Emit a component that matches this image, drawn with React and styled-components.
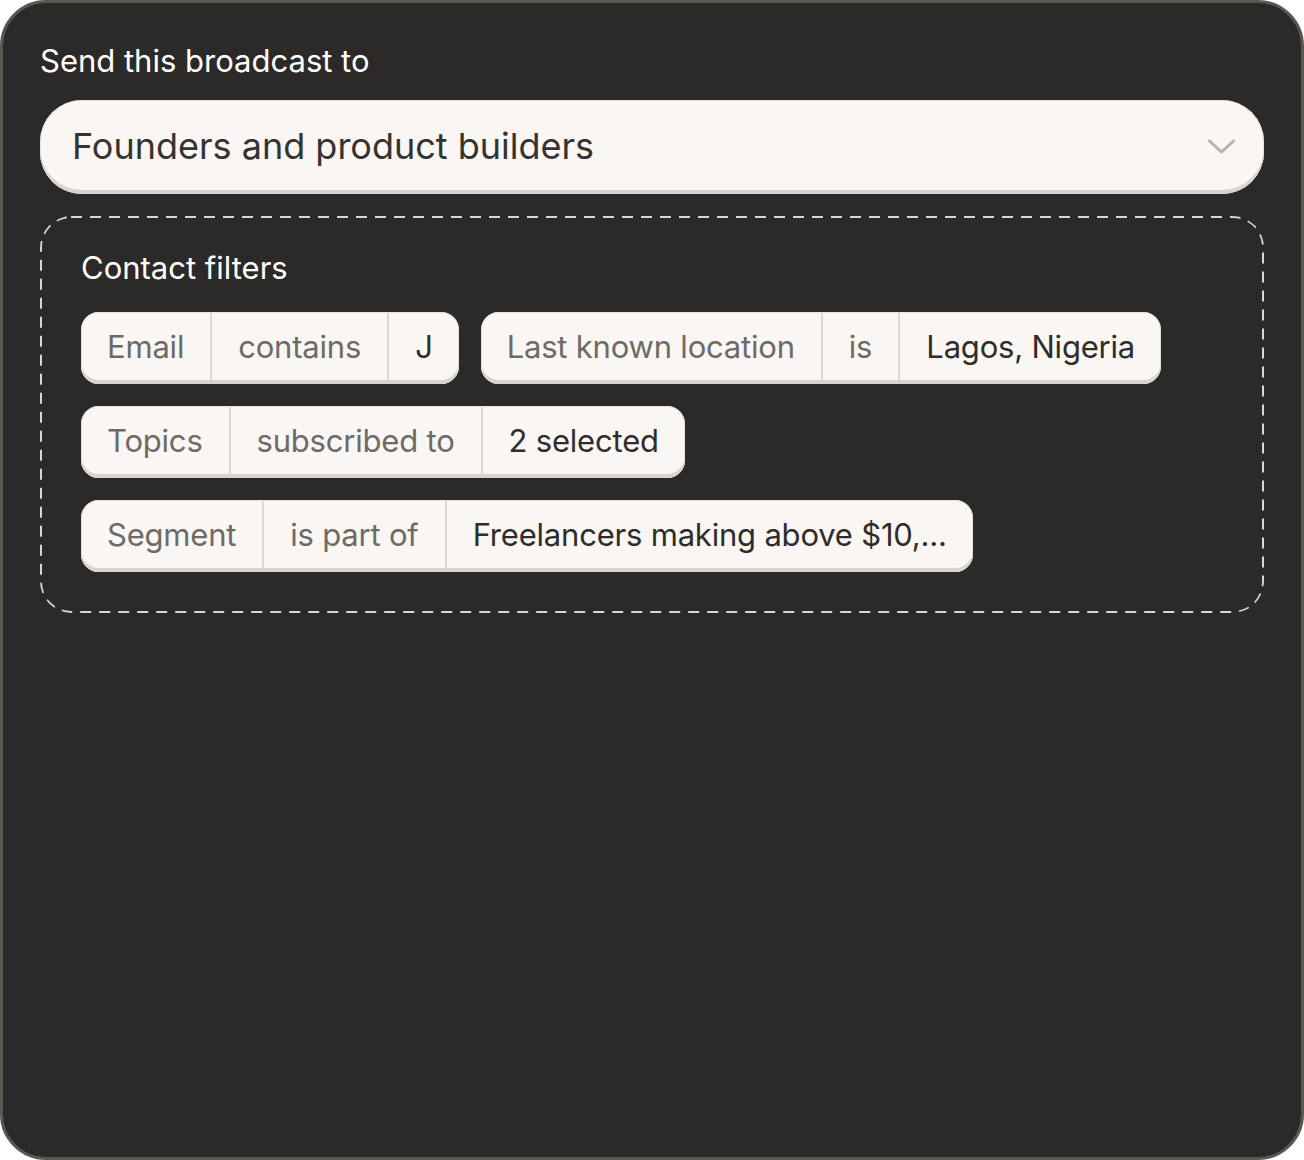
import React from "react";
import styled, { createGlobalStyle } from "styled-components";

const GlobalStyle = createGlobalStyle`
  html, body {
    margin: 0;
    padding: 0;
    background: #ffffff;
  }
  body {
    font-family: Inter, "Noto Sans", sans-serif;
  }
`;

const dashed = encodeURIComponent(
  `<svg xmlns="http://www.w3.org/2000/svg" width="100%" height="100%"><rect x="0" y="0" width="100%" height="100%" rx="31" ry="31" fill="none" stroke="#d9d5d0" stroke-width="4" stroke-dasharray="11 8"/></svg>`
);

const filters = [
  [
    { field: "Email", op: "contains", value: "J" },
    { field: "Last known location", op: "is", value: "Lagos, Nigeria" },
  ],
  [{ field: "Topics", op: "subscribed to", value: "2 selected" }],
  [{ field: "Segment", op: "is part of", value: "Freelancers making above $10,..." }],
];

export default function App() {
  return (
    <>
      <GlobalStyle />
      <Card>
        <Label>Send this broadcast to</Label>
        <Select>
          <span>Founders and product builders</span>
          <svg width="29" height="17" viewBox="0 0 29 17" fill="none">
            <path
              d="M2.5 3 L14.5 14 L26.5 3"
              stroke="#b6b2ae"
              strokeWidth="3"
              strokeLinecap="round"
              strokeLinejoin="round"
            />
          </svg>
        </Select>
        <FilterBox>
          <FilterTitle>Contact filters</FilterTitle>
          {filters.map((row, i) => (
            <ChipRow key={i}>
              {row.map((f) => (
                <Chip key={f.field}>
                  <Part>{f.field}</Part>
                  <Part>{f.op}</Part>
                  <Part $value>{f.value}</Part>
                </Chip>
              ))}
            </ChipRow>
          ))}
        </FilterBox>
      </Card>
    </>
  );
}

const Card = styled.div`
  box-sizing: border-box;
  width: 1304px;
  height: 1160px;
  background: #2c2a28;
  border: 3px solid #5b5753;
  border-radius: 46px;
  padding: 37px 37px;
  display: flex;
  flex-direction: column;
`;

const Label = styled.div`
  color: #ffffff;
  font-size: 31px;
  line-height: 42px;
  margin-bottom: 18px;
`;

const Select = styled.div`
  box-sizing: border-box;
  height: 94px;
  background: #f9f6f3;
  border-radius: 42px;
  box-shadow: inset 0 -4px 0 #d8d4cf, inset 0 0 0 1px #e4e0dc;
  display: flex;
  align-items: center;
  justify-content: space-between;
  padding: 0 28px 2px 32px;
  font-size: 36px;
  color: #353331;
`;

const FilterBox = styled.div`
  margin-top: 22px;
  background-image: url("data:image/svg+xml,${dashed}");
  border-radius: 32px;
  padding: 31px 41px 41px;
  display: flex;
  flex-direction: column;
  gap: 22px;
`;

const FilterTitle = styled.div`
  color: #ffffff;
  font-size: 31px;
  line-height: 42px;
  margin-bottom: 1px;
`;

const ChipRow = styled.div`
  display: flex;
  gap: 22px;
`;

const Chip = styled.div`
  box-sizing: border-box;
  height: 72px;
  display: flex;
  align-items: stretch;
  background: #f9f6f3;
  border-radius: 18px;
  box-shadow: inset 0 -4px 0 #d8d4cf, inset 0 0 0 1px #e4e0dc;
  padding: 1px 0 4px;
`;

const Part = styled.div`
  display: flex;
  align-items: center;
  padding: 0 26px;
  font-size: 31px;
  letter-spacing: -0.2px;
  color: ${(p) => (p.$value ? "#2f2d2b" : "#6e6a66")};
  & + & {
    border-left: 2px solid #dcd8d3;
  }
`;
